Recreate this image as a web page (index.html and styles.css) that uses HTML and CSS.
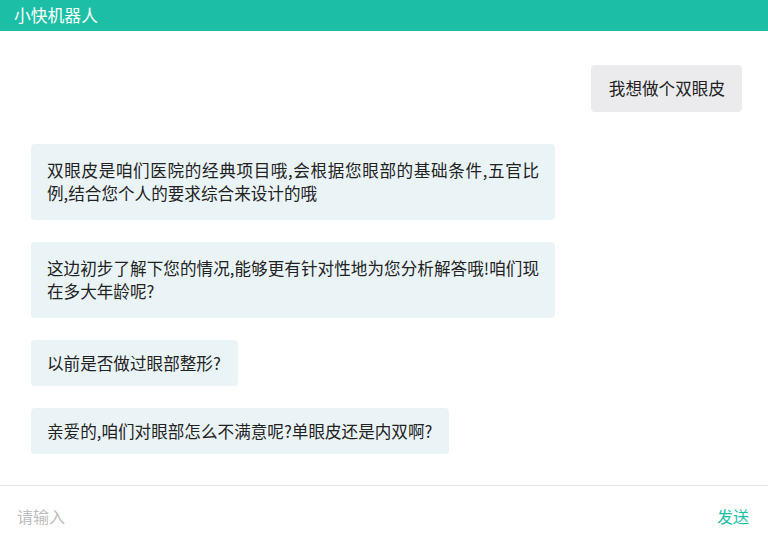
FILE: index.html
```html
<!DOCTYPE html>
<html lang="zh-CN">
<head>
<meta charset="utf-8">
<title>小快机器人</title>
<link rel="stylesheet" href="styles.css">
</head>
<body>
<div class="app">
  <header class="topbar">小快机器人</header>
  <main class="chat">
    <div class="row row-user">
      <div class="bubble bubble-user">我想做个双眼皮</div>
    </div>
    <div class="row row-bot">
      <div class="bubble bubble-bot multi">双眼皮是咱们医院的经典项目哦,会根据您眼部的基础条件,五官比例,结合您个人的要求综合来设计的哦</div>
    </div>
    <div class="row row-bot">
      <div class="bubble bubble-bot multi">这边初步了解下您的情况,能够更有针对性地为您分析解答哦!咱们现在多大年龄呢?</div>
    </div>
    <div class="row row-bot">
      <div class="bubble bubble-bot">以前是否做过眼部整形?</div>
    </div>
    <div class="row row-bot">
      <div class="bubble bubble-bot">亲爱的,咱们对眼部怎么不满意呢?单眼皮还是内双啊?</div>
    </div>
  </main>
  <footer class="inputbar">
    <input class="input" type="text" placeholder="请输入">
    <button class="send" type="button">发送</button>
  </footer>
</div>
</body>
</html>
```

FILE: styles.css
```css
* { box-sizing: border-box; }
html, body {
  margin: 0;
  padding: 0;
  background: #ffffff;
}
body {
  font-family: "Noto Sans CJK SC", "Noto Sans", sans-serif;
  color: #222222;
}
.app {
  width: 768px;
  height: 542px;
  display: flex;
  flex-direction: column;
  overflow: hidden;
}
.topbar {
  height: 31px;
  background: #1cbfa6;
  color: #ffffff;
  font-size: 16.8px;
  line-height: 31px;
  padding-left: 14px;
}
.chat {
  flex: 1;
  display: flex;
  flex-direction: column;
  gap: 22px;
  padding-top: 34px;
}
.row {
  display: flex;
}
.row-user {
  justify-content: flex-end;
  padding-right: 26px;
  margin-bottom: 10px;
}
.row-bot {
  justify-content: flex-start;
  padding-left: 31px;
}
.bubble {
  font-size: 16.6px;
  line-height: 23px;
  border-radius: 4px;
}
.bubble-user {
  background: #ebebee;
  padding: 12px 17px 12px 18px;
}
.bubble-bot {
  background: #eaf4f7;
  max-width: 524px;
  padding: 11.5px 17px 11.5px 16px;
  text-align: justify;
}
.bubble-bot.multi {
  padding-top: 15px;
  padding-right: 16px;
  padding-bottom: 15px;
}
.inputbar {
  height: 57px;
  border-top: 1px solid #e6e6e6;
  display: flex;
  align-items: center;
  padding: 4px 19px 0 17px;
}
.input {
  flex: 1;
  border: none;
  outline: none;
  padding: 0;
  background: transparent;
  font-family: "Noto Sans CJK SC", "Noto Sans", sans-serif;
  font-size: 16px;
  color: #222222;
}
.input::placeholder {
  color: #bdbdbd;
}
.send {
  border: none;
  background: transparent;
  padding: 0;
  font-family: "Noto Sans CJK SC", "Noto Sans", sans-serif;
  font-size: 16px;
  color: #1cbfa6;
}
```
